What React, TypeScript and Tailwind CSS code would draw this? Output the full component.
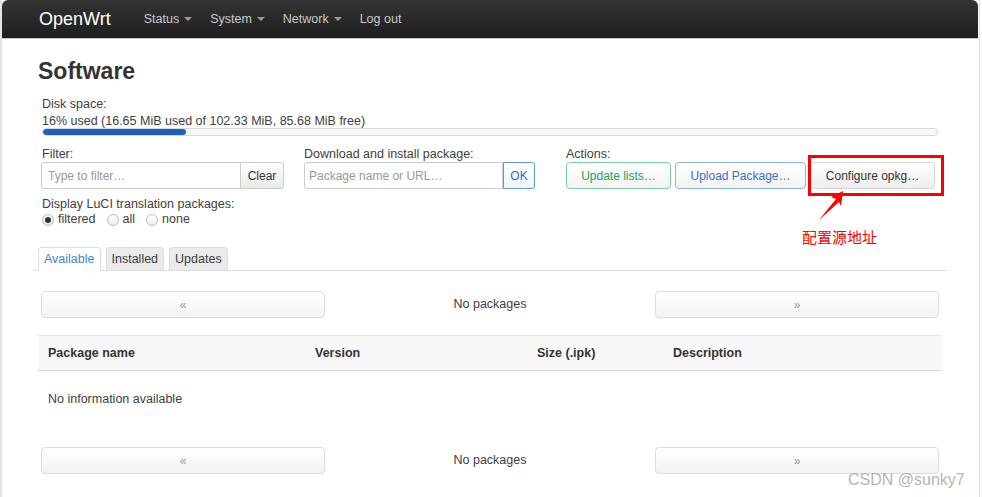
const font = { fontFamily: '"Liberation Sans", Arial, "Noto Sans CJK SC", sans-serif' };

const Caret = () => (
  <span className="ml-[5px] inline-block h-0 w-0 border-l-[4px] border-r-[4px] border-t-[4px] border-l-transparent border-r-transparent border-t-[#9a9a9a] align-middle" />
);

const Header = () => (
  <header className="flex h-[39px] items-center rounded-t-[6px] border-b border-[#c8c8c8] bg-gradient-to-b from-[#333] to-[#1f1f1f] pl-[37px]">
    <span className="text-[18px] text-white">OpenWrt</span>
    <nav className="ml-[33px] flex items-center gap-[18px] text-[12.5px] text-[#c8c8c8]">
      <span>Status<Caret /></span>
      <span>System<Caret /></span>
      <span>Network<Caret /></span>
      <span>Log out</span>
    </nav>
  </header>
);

const Radio = ({ label, checked }: { label: string; checked?: boolean }) => (
  <span className="mr-[11px] flex items-center gap-[4px]">
    <span className="flex h-[12px] w-[12px] items-center justify-center rounded-full border border-[#bbb] bg-gradient-to-b from-white to-[#eee]">
      {checked && <span className="h-[6px] w-[6px] rounded-full bg-[#333]" />}
    </span>
    {label}
  </span>
);

const Pager = () => (
  <div className="grid grid-cols-[284px_1fr_284px] items-center px-[3px]">
    <div className="flex h-[27px] items-center justify-center rounded-[4px] border border-[#ddd] bg-gradient-to-b from-white to-[#f3f3f3] text-[12px] text-[#999]">«</div>
    <div className="text-center text-[12.5px] text-[#404040]">No packages</div>
    <div className="flex h-[27px] items-center justify-center rounded-[4px] border border-[#ddd] bg-gradient-to-b from-white to-[#f3f3f3] text-[12px] text-[#999]">»</div>
  </div>
);

export default function App() {
  return (
    <div style={font} className="relative flex h-[497px] overflow-hidden bg-white text-[#404040]">
      <div className="w-[2px] bg-[#e4e4e4]" />
      <div className="w-[976px]">
        <Header />
        <main className="ml-[36px] w-[904px]">
          <h2 className="mt-[18px] text-[23px] font-bold leading-[28px] text-[#333]">Software</h2>
          <div className="mt-[11px] px-[4px] text-[12.5px] leading-[17px]">
            <div>Disk space:</div>
            <div>16% used (16.65 MiB used of 102.33 MiB, 85.68 MiB free)</div>
            <div className="-mt-[2px] h-[8px] w-[896px] overflow-hidden rounded-full border border-[#d8d8d8] bg-[#f7f7f7]">
              <div className="h-full w-[143px] rounded-full bg-[#1c5fc0]" />
            </div>
          </div>

          <div className="mt-[10px] flex pl-[3px] text-[12px]">
            <div className="w-[263px]">
              <div className="pl-[1px] text-[12.5px] leading-[16px]">Filter:</div>
              <div className="flex h-[27px]">
                <div className="flex w-[200px] items-center rounded-l-[3px] border border-[#ccc] px-[6px] text-[#999]">Type to filter…</div>
                <div className="flex w-[43px] items-center justify-center rounded-r-[3px] border border-l-0 border-[#ccc] bg-gradient-to-b from-white to-[#eaeaea] text-[#333]">Clear</div>
              </div>
            </div>
            <div className="w-[262px]">
              <div className="text-[12.5px] leading-[16px]">Download and install package:</div>
              <div className="flex h-[27px]">
                <div className="flex w-[199px] items-center rounded-l-[3px] border border-[#ccc] px-[4px] text-[#999]">Package name or URL…</div>
                <div className="flex w-[32px] items-center justify-center rounded-r-[3px] border border-[#5b9ae0] bg-gradient-to-b from-white to-[#f0f4fa] text-[#2f6fc4]">OK</div>
              </div>
            </div>
            <div>
              <div className="text-[12.5px] leading-[16px]">Actions:</div>
              <div className="flex h-[27px] gap-[4px]">
                <div className="flex w-[105px] items-center justify-center rounded-[4px] border border-[#7cd0a0] bg-gradient-to-b from-white to-[#f3f3f3] text-[#26a35a]">Update lists…</div>
                <div className="flex w-[131px] items-center justify-center rounded-[4px] border border-[#8ab6ea] bg-gradient-to-b from-white to-[#f3f3f3] text-[#3870c2]">Upload Package…</div>
                <div className="flex w-[125px] items-center justify-center rounded-[4px] border border-[#d4d4d4] bg-gradient-to-b from-white to-[#eee] text-[#333]">Configure opkg…</div>
              </div>
            </div>
          </div>

          <div className="mt-[8px] pl-[4px] text-[12.5px] leading-[15px]">
            <div>Display LuCI translation packages:</div>
            <div className="flex items-center">
              <Radio label="filtered" checked />
              <Radio label="all" />
              <Radio label="none" />
            </div>
          </div>

          <div className="-mx-[5px] mt-[20px] flex gap-[5px] border-b border-[#ddd] pl-[5px] text-[12.5px]">
            <div className="-mb-px flex h-[24px] items-center rounded-t-[4px] border border-b-white border-[#ddd] bg-white px-[5px] text-[#3a87d8]">Available</div>
            <div className="flex h-[23px] items-center rounded-t-[4px] border border-b-0 border-[#ddd] bg-[#ebebeb] px-[5px] text-[#404040]">Installed</div>
            <div className="flex h-[23px] items-center rounded-t-[4px] border border-b-0 border-[#ddd] bg-[#ebebeb] px-[5px] text-[#404040]">Updates</div>
          </div>

          <div className="mt-[20px]">
            <Pager />
          </div>

          <div className="mt-[17px] grid h-[36px] grid-cols-[267px_222px_136px_1fr] items-center border-t border-b border-[#e6e6e6] border-b-[#d8d8d8] bg-[#f8f8f8] pl-[10px] text-[12.5px] font-bold text-[#333]">
            <div>Package name</div>
            <div>Version</div>
            <div>Size (.ipk)</div>
            <div>Description</div>
          </div>
          <div className="flex h-[57px] items-center pl-[10px] text-[12.5px]">No information available</div>

          <div className="mt-[19px]">
            <Pager />
          </div>
        </main>
      </div>
      <div className="ml-[1px] w-[1px] bg-[#e0e0e0]" />

      <div className="absolute left-[808px] top-[155px] h-[41px] w-[136px] border-[3px] border-[#f00]" />
      <svg className="absolute left-[815px] top-[188px]" width="32" height="35" viewBox="0 0 32 35">
        <polygon points="28,3 16,9 21,11 4,32 24,14 26,18" fill="#f00" />
      </svg>
      <div className="absolute left-[802px] top-[228px] text-[15px] leading-[20px] text-[#f00]">配置源地址</div>
      <div className="absolute left-[848px] top-[470px] text-[16px] leading-[20px] text-[#b5b5b5]">CSDN @sunky7</div>
    </div>
  );
}
